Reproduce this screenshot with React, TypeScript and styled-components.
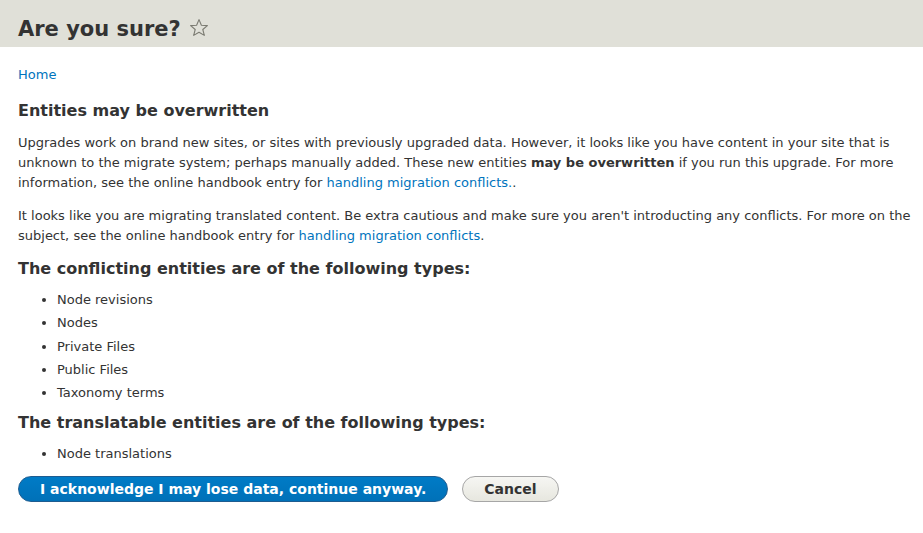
import React from "react";
import styled, { createGlobalStyle } from "styled-components";

const GlobalStyle = createGlobalStyle`
  html, body {
    margin: 0;
    padding: 0;
    background: #fff;
  }
  body {
    font-family: "DejaVu Sans", Verdana, sans-serif;
    font-size: 13px;
    line-height: 20px;
    color: #333;
  }
`;

const Page = styled.div`
  width: 923px;
`;

const Header = styled.header`
  background: #e0e0d8;
  height: 47px;
  padding: 10px 18px 0;
  display: flex;
  align-items: center;
  box-sizing: border-box;
`;

const PageTitle = styled.h1`
  margin: 0;
  font-size: 21px;
  line-height: 26px;
  font-weight: bold;
  color: #333;
  display: flex;
  align-items: center;
  gap: 8px;
`;

const StarButton = styled.span`
  display: inline-flex;
  width: 20px;
  height: 20px;
  margin-top: -2px;
`;

const Content = styled.main`
  padding: 18px 8px 0 18px;
`;

const Breadcrumb = styled.nav`
  font-size: 13px;
  line-height: 20px;
  margin: 0 0 15px;
`;

const Link = styled.a`
  color: #0074bd;
  text-decoration: none;
`;

const Heading = styled.h2`
  margin: 0 0 10px;
  font-size: 16px;
  line-height: 22px;
  font-weight: bold;
  color: #333;
`;

const Paragraph = styled.p`
  margin: 0 0 12px;
  padding-top: 1px;
`;

const List = styled.ul<{ $last?: boolean }>`
  margin: 0 0 ${(p) => (p.$last ? 8 : 9)}px;
  padding: 0 0 0 39px;
  list-style: disc;
`;

const Item = styled.li`
  line-height: 20px;
  margin-bottom: 3.3px;
`;

const Actions = styled.div`
  display: flex;
  gap: 14px;
  margin-top: 12px;
`;

const Button = styled.button<{ $primary?: boolean }>`
  font-family: "DejaVu Sans", Verdana, sans-serif;
  font-size: 14px;
  font-weight: bold;
  line-height: 18px;
  height: 26px;
  padding: 0 21px;
  border-radius: 20em;
  cursor: pointer;
  box-sizing: border-box;
  border: 1px solid ${(p) => (p.$primary ? "#1e5c90" : "#a6a6a6")};
  color: ${(p) => (p.$primary ? "#fff" : "#333")};
  background: ${(p) =>
    p.$primary
      ? "linear-gradient(to bottom, #007bc6, #0071b8)"
      : "linear-gradient(to bottom, #f6f6f3, #e7e7df)"};
`;

const Star = () => (
  <svg width="20" height="20" viewBox="0 0 20 20">
    <path
      d="M10 1.6 L12.4 7.2 L18.4 7.6 L13.8 11.5 L15.3 17.4 L10 14.2 L4.7 17.4 L6.2 11.5 L1.6 7.6 L7.6 7.2 Z"
      fill="none"
      stroke="#7b7b72"
      strokeWidth="1.1"
      strokeLinejoin="round"
    />
  </svg>
);

export default function App() {
  return (
    <Page>
      <GlobalStyle />
      <Header>
        <PageTitle>
          Are you sure?
          <StarButton>
            <Star />
          </StarButton>
        </PageTitle>
      </Header>
      <Content>
        <Breadcrumb>
          <Link href="#">Home</Link>
        </Breadcrumb>
        <Heading>Entities may be overwritten</Heading>
        <Paragraph>
          Upgrades work on brand new sites, or sites with previously upgraded data. However, it looks
          like you have content in your site that is unknown to the migrate system; perhaps manually
          added. These new entities <b>may be overwritten</b> if you run this upgrade. For more
          information, see the online handbook entry for{" "}
          <Link href="#">handling migration conflicts.</Link>.
        </Paragraph>
        <Paragraph>
          It looks like you are migrating translated content. Be extra cautious and make sure you
          aren't introducting any conflicts. For more on the subject, see the online handbook entry
          for <Link href="#">handling migration conflicts</Link>.
        </Paragraph>
        <Heading>The conflicting entities are of the following types:</Heading>
        <List>
          <Item>Node revisions</Item>
          <Item>Nodes</Item>
          <Item>Private Files</Item>
          <Item>Public Files</Item>
          <Item>Taxonomy terms</Item>
        </List>
        <Heading>The translatable entities are of the following types:</Heading>
        <List $last>
          <Item>Node translations</Item>
        </List>
        <Actions>
          <Button $primary>I acknowledge I may lose data, continue anyway.</Button>
          <Button>Cancel</Button>
        </Actions>
      </Content>
    </Page>
  );
}
